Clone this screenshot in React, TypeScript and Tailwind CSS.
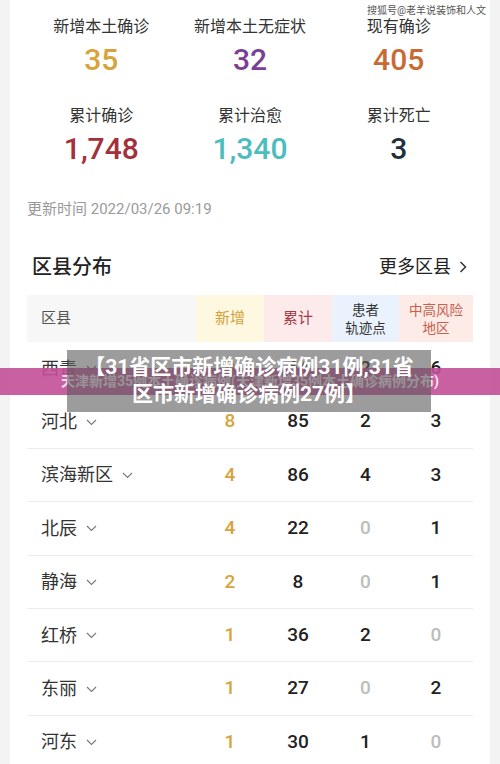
import React from "react";

const FONT = 'Roboto, "Noto Sans CJK SC", "Noto Sans", sans-serif';

type Row = { name: string; add: number; total: number; track: number; risk: number };

const rows: Row[] = [
  { name: "西青", add: 9, total: 64, track: 2, risk: 6 },
  { name: "河北", add: 8, total: 85, track: 2, risk: 3 },
  { name: "滨海新区", add: 4, total: 86, track: 4, risk: 3 },
  { name: "北辰", add: 4, total: 22, track: 0, risk: 1 },
  { name: "静海", add: 2, total: 8, track: 0, risk: 1 },
  { name: "红桥", add: 1, total: 36, track: 2, risk: 0 },
  { name: "东丽", add: 1, total: 27, track: 0, risk: 2 },
  { name: "河东", add: 1, total: 30, track: 1, risk: 0 },
];

function Stat({ label, value, color }: { label: string; value: string; color: string }) {
  return (
    <div className="flex flex-col items-center">
      <div className="text-[16px] leading-[22px] text-[#333]">{label}</div>
      <div className={`mt-[4px] text-[30px] leading-[36px] font-medium ${color}`}>{value}</div>
    </div>
  );
}

function Chevron() {
  return (
    <svg width="11" height="7" viewBox="0 0 11 7" className="ml-[9px] mt-[1px]">
      <path d="M1 1 L5.5 5.5 L10 1" fill="none" stroke="#777" strokeWidth="1.1" />
    </svg>
  );
}

function Num({ v, cls }: { v: number; cls?: string }) {
  return (
    <div className={`flex items-center justify-center text-[19px] font-medium ${v === 0 ? "text-[#bdbdbd]" : cls ?? "text-[#222]"}`}>
      {v}
    </div>
  );
}

export default function App() {
  return (
    <div className="relative w-[500px] h-[764px] overflow-hidden bg-[#f3f3f3] px-[10px]" style={{ fontFamily: FONT }}>
      <div className="h-full bg-white px-[17px]">
        <div className="grid grid-cols-3 pt-[16px]">
          <Stat label="新增本土确诊" value="35" color="text-[#d9a23a]" />
          <Stat label="新增本土无症状" value="32" color="text-[#7b3f95]" />
          <Stat label="现有确诊" value="405" color="text-[#c96a35]" />
        </div>
        <div className="grid grid-cols-3 mt-[27px]">
          <Stat label="累计确诊" value="1,748" color="text-[#a3303a]" />
          <Stat label="累计治愈" value="1,340" color="text-[#4bbdbd]" />
          <Stat label="累计死亡" value="3" color="text-[#1f3040]" />
        </div>
        <div className="mt-[32px] text-[15px] leading-[20px] text-[#9a9a9a]">更新时间 2022/03/26 09:19</div>

        <div className="mt-[34px] flex items-center justify-between pl-[5px] pr-[6px]">
          <div className="text-[20px] leading-[28px] font-medium text-[#222]">区县分布</div>
          <div className="flex items-center text-[18px] leading-[28px] text-[#222]">
            更多区县
            <svg width="8" height="12" viewBox="0 0 8 12" className="ml-[8px]">
              <path d="M1.5 1 L6.5 6 L1.5 11" fill="none" stroke="#333" strokeWidth="1.5" />
            </svg>
          </div>
        </div>

        <div className="mt-[14px] grid grid-cols-[169px_68px_68px_67px_1fr] h-[47px]">
          <div className="flex items-center bg-[#f7f7f7] pl-[14px] text-[15px] text-[#555]">区县</div>
          <div className="flex items-center justify-center bg-[#fff8e1] text-[15px] text-[#d4a03a]">新增</div>
          <div className="flex items-center justify-center bg-[#fdebec] text-[15px] text-[#a83a45]">累计</div>
          <div className="flex flex-col items-center justify-center bg-[#eaf3fd] text-[13.5px] leading-[18px] text-[#333]">
            <span>患者</span>
            <span>轨迹点</span>
          </div>
          <div className="flex flex-col items-center justify-center bg-[#fdebe8] text-[13.5px] leading-[18px] text-[#c8604a]">
            <span>中高风险</span>
            <span>地区</span>
          </div>
        </div>

        {rows.map((r) => (
          <div
            key={r.name}
            className="grid grid-cols-[169px_68px_68px_67px_1fr] h-[53.4px] border-b border-[#ececec]"
          >
            <div className="flex items-center pl-[14px] text-[18px] text-[#333]">
              {r.name}
              <Chevron />
            </div>
            <Num v={r.add} cls="text-[#d9a23a]" />
            <Num v={r.total} />
            <Num v={r.track} />
            <Num v={r.risk} />
          </div>
        ))}
      </div>

      {/* watermark */}
      <div className="absolute left-[367px] top-[4px] text-[10px] leading-[14px] text-[#555] whitespace-nowrap">
        搜狐号@老羊说装饰和人文
      </div>

      {/* pink band */}
      <div className="absolute left-0 top-[368px] w-[500px] h-[27px] bg-[#c24f97]/90 flex items-center justify-center">
        <span className="text-[14px] font-bold text-white/85 whitespace-nowrap">
          天津新增35例本土确诊病例(天津新增35例本土确诊病例分布)
        </span>
      </div>

      {/* gray title box */}
      <div className="absolute left-[67px] top-[350px] w-[364px] h-[62px] bg-[rgba(90,90,90,0.6)] flex flex-col items-center justify-center text-white font-bold text-[21px] leading-[27px]">
        <span className="whitespace-nowrap">【31省区市新增确诊病例31例,31省</span>
        <span className="whitespace-nowrap">区市新增确诊病例27例】</span>
      </div>
    </div>
  );
}
